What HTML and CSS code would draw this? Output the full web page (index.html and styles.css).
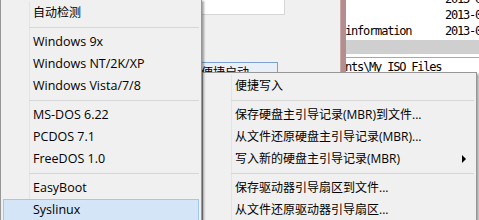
FILE: index.html
```html
<!DOCTYPE html>
<html>
<head>
<meta charset="utf-8">
<link rel="stylesheet" href="styles.css">
</head>
<body>
<div class="app">
  <div class="leftpane">
    <div class="editbox"></div>
    <div class="button">便捷启动</div>
  </div>
  <div class="divider"></div>
  <div class="listpane">
    <div class="rows">
      <div class="row"><span class="name"></span><span class="date">2013-03-12</span></div>
      <div class="row"><span class="name"></span><span class="date">2013-03-12</span></div>
      <div class="row"><span class="name">information</span><span class="date">2013-03-12</span></div>
    </div>
    <div class="hscroll"></div>
    <div class="pathbox">nts\My ISO Files</div>
  </div>
</div>

<div class="menu menu-left">
  <div class="item">自动检测</div>
  <div class="sep"></div>
  <div class="item lat">Windows 9x</div>
  <div class="item lat">Windows NT/2K/XP</div>
  <div class="item lat">Windows Vista/7/8</div>
  <div class="sep"></div>
  <div class="item lat">MS-DOS 6.22</div>
  <div class="item lat">PCDOS 7.1</div>
  <div class="item lat">FreeDOS 1.0</div>
  <div class="sep"></div>
  <div class="item lat">EasyBoot</div>
  <div class="item lat hot">Syslinux</div>
</div>

<div class="menu menu-right">
  <div class="item">便捷写入</div>
  <div class="sep"></div>
  <div class="item">保存硬盘主引导记录(MBR)到文件...</div>
  <div class="item">从文件还原硬盘主引导记录(MBR)...</div>
  <div class="item"><span>写入新的硬盘主引导记录(MBR)</span><span class="arrow"></span></div>
  <div class="sep"></div>
  <div class="item">保存驱动器引导扇区到文件...</div>
  <div class="item">从文件还原驱动器引导扇区...</div>
</div>
</body>
</html>
```

FILE: styles.css
```css
html, body {
  margin: 0;
  padding: 0;
}
body {
  width: 479px;
  height: 220px;
  overflow: hidden;
  position: relative;
  background: #f0f0f0;
  font-family: "Open Sans", "Noto Sans CJK SC", sans-serif;
  font-size: 12px;
  color: #000;
}
.app {
  display: flex;
  height: 220px;
}
.leftpane {
  width: 340px;
  flex: none;
  background: #f0f0f0;
}
.editbox {
  margin-left: 150px;
  width: 134px;
  height: 14px;
  background: #fff;
  border-right: 1px solid #d6d6d6;
  border-bottom: 1px solid #d6d6d6;
}
.button {
  margin-top: 47px;
  margin-left: 172px;
  width: 104px;
  height: 22px;
  border: 1px solid #7ba3cf;
  background: #e8eff7;
  font-family: "Noto Sans CJK SC", sans-serif;
  font-size: 12px;
  line-height: 18px;
  text-align: center;
}
.divider {
  width: 6px;
  flex: none;
  background: #b48e8e;
  border-left: 1px solid #c7a8a8;
  box-sizing: border-box;
}
.listpane {
  flex: 1;
  background: #fff;
  overflow: hidden;
  font-family: "DejaVu Sans Mono", monospace;
  font-size: 12px;
  letter-spacing: -1.2px;
}
.rows {
  height: 40px;
  overflow: hidden;
}
.row {
  height: 16px;
  line-height: 16px;
  display: flex;
  white-space: nowrap;
}
.row:first-child {
  margin-top: -9px;
}
.name {
  width: 100px;
  flex: none;
  margin-left: -1px;
}
.hscroll {
  height: 14px;
  background: #cfcfcf;
}
.pathbox {
  margin-top: 3px;
  border-top: 1px solid #a8a8a8;
  padding-top: 2px;
  line-height: 14px;
  white-space: nowrap;
  margin-left: -1px;
}

.menu {
  position: absolute;
  box-sizing: border-box;
  background: #f0f0f0;
  border: 1px solid #979797;
  padding: 2px;
  box-shadow: 2px 2px 2px rgba(0, 0, 0, 0.35);
}
.menu::before {
  content: "";
  position: absolute;
  top: 2px;
  bottom: 2px;
  left: 28px;
  width: 1px;
  background: #e3e3e3;
}
.menu-left {
  left: 0;
  top: -1px;
  width: 202px;
  height: 228px;
  z-index: 2;
}
.menu-right {
  left: 202px;
  top: 72px;
  width: 275px;
  height: 156px;
  z-index: 1;
}
.item {
  position: relative;
  height: 22px;
  line-height: 22px;
  padding-left: 30px;
  padding-right: 8px;
  box-sizing: border-box;
  white-space: nowrap;
  display: flex;
  justify-content: space-between;
  align-items: center;
}
.lat {
  font-size: 12.5px;
}
.hot {
  background: #d3e5f7;
  border: 1px solid #a2c7ee;
  padding-left: 29px;
}
.sep {
  height: 7px;
  position: relative;
}
.sep::after {
  content: "";
  position: absolute;
  left: 26px;
  right: 0;
  top: 3px;
  height: 1px;
  background: #d7d7d7;
}
.arrow {
  width: 0;
  height: 0;
  border-left: 4px solid #000;
  border-top: 4px solid transparent;
  border-bottom: 4px solid transparent;
}
```
